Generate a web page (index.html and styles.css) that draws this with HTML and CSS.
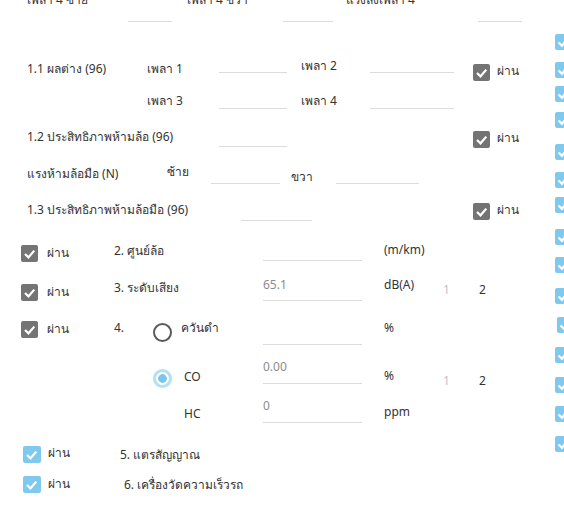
FILE: index.html
```html
<!DOCTYPE html>
<html lang="th">
<head>
    <meta charset="UTF-8">
    <meta name="viewport" content="width=device-width, initial-scale=1.0">
    <title>ตรวจสภาพรถ</title>
    <link rel="stylesheet" href="styles.css">
</head>
<body>
<div class="page">
    <div class="form">
        <!-- axle 4 -->
        <div class="row axle">
            <span class="t1">เพลา 4 ซ้าย</span>
            <span class="line f1"></span>
            <span class="t2">เพลา 4 ขวา</span>
            <span class="line f2"></span>
            <span class="t3">แรงลงเพลา 4</span>
            <span class="line f3"></span>
        </div>

        <!-- 1.1 -->
        <div class="row diff">
            <span class="t1">1.1 ผลต่าง (96)</span>
            <span class="t2">เพลา 1</span>
            <span class="line f1"></span>
            <span class="t3">เพลา 2</span>
            <span class="line f2"></span>
            <span class="chk gray"><svg viewBox="0 0 17 17"><path d="M4 9 L7.5 12.3 L13.3 5.6"/></svg></span>
            <span class="pass">ผ่าน</span>
        </div>
        <div class="row diff2">
            <span class="t1">เพลา 3</span>
            <span class="line f1"></span>
            <span class="t2">เพลา 4</span>
            <span class="line f2"></span>
        </div>

        <!-- 1.2 -->
        <div class="row eff">
            <span class="t1">1.2 ประสิทธิภาพห้ามล้อ (96)</span>
            <span class="line f1"></span>
            <span class="chk gray"><svg viewBox="0 0 17 17"><path d="M4 9 L7.5 12.3 L13.3 5.6"/></svg></span>
            <span class="pass">ผ่าน</span>
        </div>
        <div class="row hand">
            <span class="t1">แรงห้ามล้อมือ (N)</span>
            <span class="t2">ซ้าย</span>
            <span class="line f1"></span>
            <span class="t3">ขวา</span>
            <span class="line f2"></span>
        </div>

        <!-- 1.3 -->
        <div class="row eff2">
            <span class="t1">1.3 ประสิทธิภาพห้ามล้อมือ (96)</span>
            <span class="line f1"></span>
            <span class="chk gray"><svg viewBox="0 0 17 17"><path d="M4 9 L7.5 12.3 L13.3 5.6"/></svg></span>
            <span class="pass">ผ่าน</span>
        </div>

        <!-- 2. -->
        <div class="row wheel">
            <span class="chk gray"><svg viewBox="0 0 17 17"><path d="M4 9 L7.5 12.3 L13.3 5.6"/></svg></span>
            <span class="pass">ผ่าน</span>
            <span class="t1">2. ศูนย์ล้อ</span>
            <span class="line f1"></span>
            <span class="unit">(m/km)</span>
        </div>

        <!-- 3. -->
        <div class="row sound">
            <span class="chk gray"><svg viewBox="0 0 17 17"><path d="M4 9 L7.5 12.3 L13.3 5.6"/></svg></span>
            <span class="pass">ผ่าน</span>
            <span class="t1">3. ระดับเสียง</span>
            <span class="line f1">65.1</span>
            <span class="unit">dB(A)</span>
            <span class="n1">1</span>
            <span class="n2">2</span>
        </div>

        <!-- 4. -->
        <div class="row smoke">
            <span class="chk gray"><svg viewBox="0 0 17 17"><path d="M4 9 L7.5 12.3 L13.3 5.6"/></svg></span>
            <span class="pass">ผ่าน</span>
            <span class="num">4.</span>
            <span class="radio"></span>
            <span class="t1">ควันดำ</span>
            <span class="line f1"></span>
            <span class="unit">%</span>
        </div>
        <div class="row co">
            <span class="radio on"></span>
            <span class="t1">CO</span>
            <span class="line f1">0.00</span>
            <span class="unit">%</span>
            <span class="n1">1</span>
            <span class="n2">2</span>
        </div>
        <div class="row hc">
            <span class="t1">HC</span>
            <span class="line f1">0</span>
            <span class="unit">ppm</span>
        </div>

        <!-- 5. / 6. -->
        <div class="row horn">
            <span class="chk blue"><svg viewBox="0 0 17 17"><path d="M4 9 L7.5 12.3 L13.3 5.6"/></svg></span>
            <span class="pass">ผ่าน</span>
            <span class="t1">5. แตรสัญญาณ</span>
        </div>
        <div class="row speed">
            <span class="chk blue"><svg viewBox="0 0 17 17"><path d="M4 9 L7.5 12.3 L13.3 5.6"/></svg></span>
            <span class="pass">ผ่าน</span>
            <span class="t1">6. เครื่องวัดความเร็วรถ</span>
        </div>
    </div>

    <!-- next column, cut off by the window -->
    <div class="side">
        <span class="sbox"><svg viewBox="0 0 16 16"><path d="M3.5 8.5 L7 11.8 L12.5 5"/></svg></span>
        <span class="sbox"><svg viewBox="0 0 16 16"><path d="M3.5 8.5 L7 11.8 L12.5 5"/></svg></span>
        <span class="sbox"><svg viewBox="0 0 16 16"><path d="M3.5 8.5 L7 11.8 L12.5 5"/></svg></span>
        <span class="sbox"><svg viewBox="0 0 16 16"><path d="M3.5 8.5 L7 11.8 L12.5 5"/></svg></span>
        <span class="sbox"><svg viewBox="0 0 16 16"><path d="M3.5 8.5 L7 11.8 L12.5 5"/></svg></span>
        <span class="sbox"><svg viewBox="0 0 16 16"><path d="M3.5 8.5 L7 11.8 L12.5 5"/></svg></span>
        <span class="sbox"><svg viewBox="0 0 16 16"><path d="M3.5 8.5 L7 11.8 L12.5 5"/></svg></span>
        <span class="sbox"><svg viewBox="0 0 16 16"><path d="M3.5 8.5 L7 11.8 L12.5 5"/></svg></span>
        <span class="sbox"><svg viewBox="0 0 16 16"><path d="M3.5 8.5 L7 11.8 L12.5 5"/></svg></span>
        <span class="sbox"><svg viewBox="0 0 16 16"><path d="M3.5 8.5 L7 11.8 L12.5 5"/></svg></span>
        <span class="sbox"><svg viewBox="0 0 16 16"><path d="M3.5 8.5 L7 11.8 L12.5 5"/></svg></span>
        <span class="sbox"><svg viewBox="0 0 16 16"><path d="M3.5 8.5 L7 11.8 L12.5 5"/></svg></span>
        <span class="sbox"><svg viewBox="0 0 16 16"><path d="M3.5 8.5 L7 11.8 L12.5 5"/></svg></span>
        <span class="sbox"><svg viewBox="0 0 16 16"><path d="M3.5 8.5 L7 11.8 L12.5 5"/></svg></span>
        <span class="sbox"><svg viewBox="0 0 16 16"><path d="M3.5 8.5 L7 11.8 L12.5 5"/></svg></span>
    </div>
</div>
</body>
</html>
```

FILE: styles.css
```css
html, body {
    margin: 0;
    overflow: hidden;
}

body {
    font-family: "Noto Sans", "Liberation Sans", sans-serif;
    font-size: 12px;
    line-height: 16px;
    color: #333;
    background: #fff;
}

.page {
    display: flex;
    width: 580px;
}

.form {
    flex: none;
    width: 555px;
    margin-top: -8px;
}

.row {
    display: flex;
    align-items: flex-start;
}

.row > span {
    flex: none;
    white-space: nowrap;
}

/* input underline */
.line {
    box-sizing: border-box;
    border-bottom: 1px solid #dcdcdc;
    color: #8c8c8c;
}

.chk {
    width: 17px;
    height: 17px;
    border-radius: 2px;
}
.chk svg {
    display: block;
    width: 17px;
    height: 17px;
}
.chk path,
.sbox path {
    fill: none;
    stroke: #fff;
    stroke-width: 2.2;
}
.chk.gray { background: #747474; }
.chk.blue { background: #7fc9ef; width: 18px; }

.radio {
    box-sizing: border-box;
    width: 19px;
    height: 19px;
    border-radius: 50%;
    border: 2px solid #5a5a5a;
}
.radio.on {
    border: 3px solid #b2e0f6;
    background: radial-gradient(circle, #79c5ee 0 4px, #fff 4.6px);
}

.unit { width: 59px; margin-left: 22px; }
.n1 { width: 36px; color: #c4c4c4; }

/* axle 4 (top, partly scrolled off) */
.axle { height: 30px; padding-left: 27px; }
.axle .t1 { width: 101px; }
.axle .f1 { width: 44px; height: 30px; }
.axle .t2 { width: 96px; margin-left: 15px; }
.axle .f2 { width: 50px; height: 30px; }
.axle .t3 { width: 132px; margin-left: 13px; }
.axle .f3 { width: 44px; height: 30px; }

/* 1.1 */
.diff { height: 20px; margin-top: 36px; padding-left: 27px; }
.diff .t1 { width: 120px; margin-top: 3px; }
.diff .t2 { width: 72px; margin-top: 3px; }
.diff .f1 { width: 68px; height: 15px; }
.diff .t3 { width: 69px; margin-left: 14px; }
.diff .f2 { width: 84px; height: 15px; }
.diff .chk { margin-left: 19px; margin-top: 6px; }
.diff .pass { margin-left: 7px; margin-top: 5px; }

.diff2 { height: 16px; margin-top: 15px; padding-left: 147px; }
.diff2 .t1 { width: 72px; }
.diff2 .f1 { width: 68px; height: 16px; }
.diff2 .t2 { width: 69px; margin-left: 14px; }
.diff2 .f2 { width: 84px; height: 16px; }

/* 1.2 */
.eff { height: 18px; margin-top: 20px; padding-left: 27px; }
.eff .t1 { width: 192px; }
.eff .f1 { width: 68px; height: 18px; }
.eff .chk { margin-left: 186px; margin-top: 2px; }
.eff .pass { margin-left: 7px; margin-top: 1px; }

.hand { height: 20px; margin-top: 17px; padding-left: 27px; }
.hand .t1 { width: 140px; margin-top: 2px; }
.hand .t2 { width: 44px; }
.hand .f1 { width: 69px; height: 20px; }
.hand .t3 { width: 45px; margin-left: 11px; margin-top: 5px; }
.hand .f2 { width: 83px; height: 20px; }

/* 1.3 */
.eff2 { height: 19px; margin-top: 18px; padding-left: 27px; }
.eff2 .t1 { width: 214px; }
.eff2 .f1 { width: 71px; height: 19px; }
.eff2 .chk { margin-left: 161px; margin-top: 1px; }
.eff2 .pass { margin-left: 7px; }

/* 2. - 4. */
.wheel, .sound, .smoke { padding-left: 21px; }
.wheel .pass, .sound .pass, .smoke .pass { width: 67px; margin-left: 9px; }
.wheel .t1, .sound .t1 { width: 149px; }
.f1 { width: 99px; }

.wheel { height: 19px; margin-top: 21px; }
.wheel .chk, .wheel .pass { margin-top: 3px; }
.wheel .t1 { margin-top: 1px; }
.wheel .f1 { height: 19px; }

.sound { height: 24px; margin-top: 16px; }
.sound .chk, .sound .pass { margin-top: 7px; }
.sound .t1 { margin-top: 3px; }
.sound .f1 { height: 24px; }
.sound .n1, .sound .n2 { margin-top: 5px; }

.smoke { height: 25px; margin-top: 19px; }
.smoke .chk, .smoke .pass { margin-top: 1px; }
.smoke .num { width: 39px; }
.smoke .radio { margin-top: 3px; }
.smoke .t1 { width: 82px; margin-left: 9px; }
.smoke .f1 { height: 25px; }

.co { height: 25px; margin-top: 14px; padding-left: 153px; }
.co .radio { margin-top: 10px; }
.co .t1 { width: 79px; margin-left: 12px; margin-top: 10px; }
.co .f1 { height: 25px; }
.co .unit { margin-top: 9px; }
.co .n1, .co .n2 { margin-top: 14px; }

.hc { height: 25px; margin-top: 14px; padding-left: 184px; }
.hc .t1 { width: 79px; margin-top: 8px; }
.hc .f1 { height: 25px; }
.hc .unit { margin-top: 6px; }

/* 5. / 6. */
.horn, .speed { height: 18px; padding-left: 23px; }
.horn .pass, .speed .pass { margin-left: 7px; }
.horn { margin-top: 22px; }
.horn .chk { margin-top: 1px; }
.horn .pass { width: 72px; }
.horn .t1 { margin-top: 2px; }
.speed { margin-top: 13px; }
.speed .pass { width: 76px; }
.speed .t1 { margin-top: 1px; }

/* clipped column on the right */
.side {
    flex: none;
    width: 20px;
    display: flex;
    flex-direction: column;
    align-items: flex-start;
}

.sbox {
    width: 16px;
    height: 16px;
    border-radius: 2px;
    background: #7fc9ef;
    margin-top: 12px;
}
.sbox svg {
    display: block;
    width: 16px;
    height: 16px;
}
.sbox:nth-child(1) { margin-top: 34px; }
.sbox:nth-child(3) { margin-top: 8px; }
.sbox:nth-child(4) { margin-top: 10px; }
.sbox:nth-child(5) { margin-top: 16px; }
.sbox:nth-child(7) { margin-top: 9px; }
.sbox:nth-child(8) { margin-top: 16px; }
.sbox:nth-child(10) { margin-top: 15px; }
.sbox:nth-child(11) { margin-top: 13px; margin-left: 2px; }
.sbox:nth-child(12),
.sbox:nth-child(13),
.sbox:nth-child(15) { margin-top: 14px; }
.sbox:nth-child(14) { margin-top: 13px; }
```
